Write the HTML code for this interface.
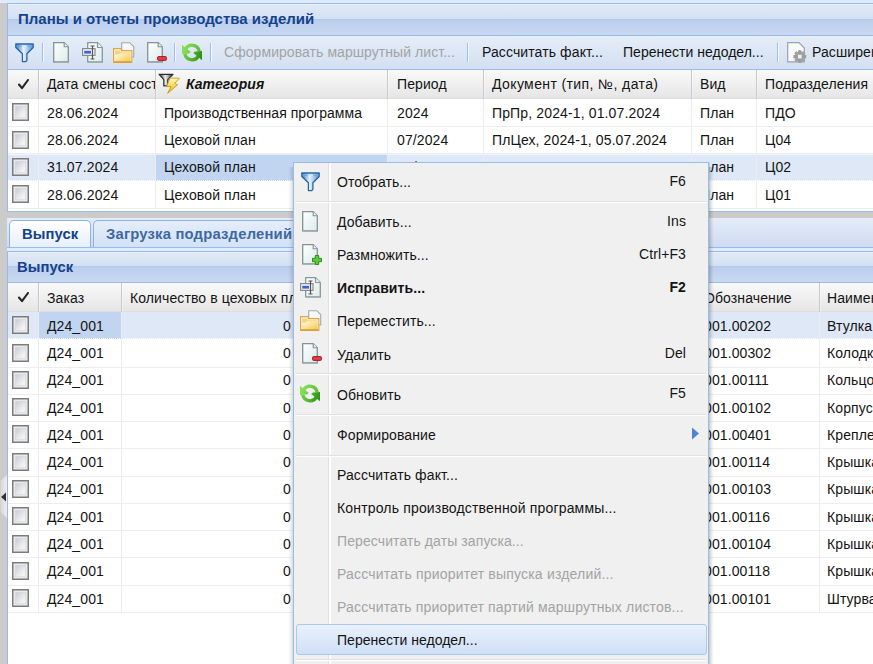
<!DOCTYPE html><html><head><meta charset="utf-8"><style>*{box-sizing:border-box}
html,body{margin:0;padding:0}
body{width:873px;height:664px;overflow:hidden;position:relative;background:#cbcbcb;font-family:"Liberation Sans",sans-serif;font-size:14px;color:#141414;letter-spacing:0.1px}
.a{position:absolute}
.t{position:absolute;white-space:nowrap;line-height:16px}
.hdr{background:linear-gradient(to bottom,#f1f5fb 0px,#e0e9f6 1px,#d4e1f3 14.8px,#b2c9ea 15.3px,#b4cbeb 16px,#bccfee 16.8px,#c8d9f1 100%)}
.hdr2{background:linear-gradient(to bottom,#f1f5fb 0px,#e0e9f6 1px,#d4e1f3 13.8px,#b2c9ea 14.3px,#b4cbeb 15px,#bccfee 15.8px,#c8d9f1 100%)}
.ttl{color:#15428b;font-weight:bold;font-size:15px}
.tb{background:linear-gradient(to bottom,#e5edf8,#d3e0f1)}
.gh{background:linear-gradient(to bottom,#f9f9f9,#e5e5e5)}
.dis{color:#a3a3a3}
.clip{position:absolute;overflow:hidden}
</style></head><body>
<svg width="0" height="0" style="position:absolute"><defs>
<linearGradient id="gdoc" x1="0" y1="0" x2="1" y2="1"><stop offset="0" stop-color="#ffffff"/><stop offset="1" stop-color="#dcebea"/></linearGradient>
<linearGradient id="gfun" x1="0" y1="0" x2="1" y2="0"><stop offset="0" stop-color="#3a78c0"/><stop offset="0.45" stop-color="#e8f4fc"/><stop offset="1" stop-color="#4f92d4"/></linearGradient>
<linearGradient id="gfold" x1="0" y1="0" x2="1" y2="1"><stop offset="0" stop-color="#fffbe8"/><stop offset="0.6" stop-color="#f6e08a"/><stop offset="1" stop-color="#f0cc40"/></linearGradient>
<linearGradient id="gfoldb" x1="0" y1="0" x2="0" y2="1"><stop offset="0" stop-color="#f4dc98"/><stop offset="1" stop-color="#ecc060"/></linearGradient>
<linearGradient id="ggrn" gradientUnits="userSpaceOnUse" x1="2" y1="4" x2="18" y2="10"><stop offset="0" stop-color="#86e058"/><stop offset="1" stop-color="#5cbc34"/></linearGradient>
<linearGradient id="ggrn2" gradientUnits="userSpaceOnUse" x1="3" y1="12" x2="20" y2="16"><stop offset="0" stop-color="#6ccc40"/><stop offset="1" stop-color="#2a8e14"/></linearGradient>
<linearGradient id="gcb" x1="0" y1="0" x2="1" y2="1"><stop offset="0" stop-color="#c6cad6"/><stop offset="0.7" stop-color="#f0f0f2"/><stop offset="1" stop-color="#f6f6f6"/></linearGradient>
<linearGradient id="gbolt" x1="0" y1="0" x2="0" y2="1"><stop offset="0" stop-color="#fff8c8"/><stop offset="0.5" stop-color="#f6da58"/><stop offset="1" stop-color="#e8b820"/></linearGradient>
<linearGradient id="ggfun" x1="0" y1="0" x2="1" y2="0"><stop offset="0" stop-color="#2a2a2a"/><stop offset="0.45" stop-color="#eeeeee"/><stop offset="1" stop-color="#303030"/></linearGradient>
</defs></svg>
<div class="a" style="left:0px;top:0px;width:873px;height:3px;background:#dfeafc"></div>
<svg class="a" style="left:0;top:475px" width="7" height="43" viewBox="0 0 7 43"><defs><linearGradient id="gtool" x1="0" y1="0" x2="1" y2="0"><stop offset="0" stop-color="#d8d8d8"/><stop offset="1" stop-color="#ececec"/></linearGradient></defs><path d="M7,0 L0.5,6 V37 L7,43 Z" fill="url(#gtool)"/><path d="M1,22 L6,17.5 V26.5 Z" fill="#333"/></svg>
<div class="a" style="left:7px;top:3px;width:880px;height:209px;border:1px solid #99bbe8;background:#fff"></div>
<div class="a hdr" style="left:8px;top:4px;width:870px;height:31px"></div>
<div class="a" style="left:8px;top:35px;width:870px;height:1px;background:#99bbe8"></div>
<div class="t ttl" style="left:18px;top:11px;;letter-spacing:-0.009px">Планы и отчеты производства изделий</div>
<div class="a tb" style="left:8px;top:36px;width:870px;height:33px"></div>
<div class="a" style="left:8px;top:69px;width:870px;height:1px;background:#99bbe8"></div>
<div class="a" style="left:42px;top:43px;width:1px;height:19px;background:#98c0f4"></div>
<div class="a" style="left:43px;top:43px;width:1px;height:19px;background:#f4f8fd"></div>
<div class="a" style="left:174px;top:43px;width:1px;height:19px;background:#98c0f4"></div>
<div class="a" style="left:175px;top:43px;width:1px;height:19px;background:#f4f8fd"></div>
<div class="a" style="left:210px;top:43px;width:1px;height:19px;background:#98c0f4"></div>
<div class="a" style="left:211px;top:43px;width:1px;height:19px;background:#f4f8fd"></div>
<div class="a" style="left:467px;top:43px;width:1px;height:19px;background:#98c0f4"></div>
<div class="a" style="left:468px;top:43px;width:1px;height:19px;background:#f4f8fd"></div>
<div class="a" style="left:777px;top:43px;width:1px;height:19px;background:#98c0f4"></div>
<div class="a" style="left:778px;top:43px;width:1px;height:19px;background:#f4f8fd"></div>
<svg class="a" style="left:15px;top:43px" width="19" height="20" viewBox="0 0 19 20"><path d="M0.8,1 H18.2 V4.5 L11.9,10.8 V17.4 L10.8,18.6 H7.4 V10.8 L0.8,4.5 Z" fill="url(#gfun)" stroke="#2d64a8" stroke-width="1.3" stroke-linejoin="round"/><path d="M1.5,3.2 H17.5" stroke="#5aaaf0" stroke-width="1"/><path d="M7,3.2 H12" stroke="#ffffff" stroke-width="1"/></svg>
<svg class="a" style="left:53px;top:42px" width="22" height="23" viewBox="0 0 22 23"><rect x="1" y="19.6" width="15" height="1.4" fill="#000" opacity="0.12"/><path d="M0.7,0.7 H11.2 L15.3,4.8 V19.8 H0.7 Z" fill="url(#gdoc)" stroke="#829494" stroke-width="1.3"/><path d="M11.2,0.7 V4.8 H15.3" fill="#e8f0f0" stroke="#829494" stroke-width="1.1"/></svg>
<svg class="a" style="left:82px;top:42px" width="22" height="23" viewBox="0 0 22 23"><rect x="6" y="19.6" width="15" height="1.4" fill="#000" opacity="0.12"/><path d="M5.7,0.7 H15.5 L20.3,5.5 V19.8 H5.7 Z" fill="url(#gdoc)" stroke="#869898" stroke-width="1.3"/><path d="M15.5,0.7 V5.5 H20.3" fill="#e8f0f0" stroke="#869898" stroke-width="1.2"/><rect x="0.6" y="6.6" width="12.4" height="6.8" fill="#f4f4f4" stroke="#8a8a8a" stroke-width="1.2"/><rect x="2.2" y="8.8" width="6.8" height="2.8" fill="#3c64d8"/><path d="M10.5,4.3 V16.7 M8.5,4 H12.5 M8.5,17 H12.5" stroke="#555" stroke-width="1.2"/></svg>
<svg class="a" style="left:113px;top:42px" width="22" height="22" viewBox="0 0 22 22"><path d="M8.7,0.7 H16.8 L20.7,4.6 V15 H8.7 Z" fill="#f8f8f8" stroke="#a4a8ac" stroke-width="1.1"/><path d="M0.6,6.6 H8.4 V8.6 H18.8 V20.4 H0.6 Z" fill="url(#gfoldb)" stroke="#e0a548" stroke-width="1.2"/><path d="M1.6,7.8 H7.4 V9.8 H17.8 V19.4 H1.6 Z" fill="none" stroke="#fff6dc" stroke-width="0.9" opacity="0.9"/><path d="M2,12.4 H5.6 L6.6,11.2 H17.4 V19 H2 Z" fill="url(#gfold)"/><path d="M1.2,19.8 H18.2" stroke="#e08c28" stroke-width="1.1"/></svg>
<svg class="a" style="left:147px;top:42px" width="22" height="23" viewBox="0 0 22 23"><rect x="1" y="19.6" width="15" height="1.4" fill="#000" opacity="0.12"/><path d="M0.7,0.7 H11.2 L15.3,4.8 V19.8 H0.7 Z" fill="url(#gdoc)" stroke="#829494" stroke-width="1.3"/><path d="M11.2,0.7 V4.8 H15.3" fill="#e8f0f0" stroke="#829494" stroke-width="1.1"/></svg>
<svg class="a" style="left:157px;top:56px" width="10" height="5" viewBox="0 0 10 5"><rect x="0.6" y="0.6" width="8.8" height="3.8" rx="0.8" fill="#e0404a" stroke="#a81820" stroke-width="1"/></svg>
<svg class="a" style="left:182px;top:43px" width="21" height="19" viewBox="0 0 21 19"><path d="M17.2,8.1 A7.35,7.35 0 0 0 3.63,5.83" fill="none" stroke="url(#ggrn)" stroke-width="3.3"/><path d="M0,1.7 L0,10.9 L7,10.4 L8.8,8.9 Z" fill="url(#ggrn)"/><path d="M2.8,10.9 A7.35,7.35 0 0 0 16.37,13.17" fill="none" stroke="url(#ggrn2)" stroke-width="3.3"/><path d="M20,17.3 L20,8.1 L13,8.6 L11.2,10.1 Z" fill="url(#ggrn2)"/></svg>
<div class="t dis" style="left:224px;top:44px;;letter-spacing:0.062px">Сформировать маршрутный лист...</div>
<div class="t " style="left:482px;top:44px;;letter-spacing:0.107px">Рассчитать факт...</div>
<div class="t " style="left:623px;top:44px;;letter-spacing:0.017px">Перенести недодел...</div>
<svg class="a" style="left:787px;top:42px" width="20" height="22" viewBox="0 0 20 22"><path d="M0.7,0.7 H12 L17.3,6 V19.8 H0.7 Z" fill="#fafafa" stroke="#9aa4ac" stroke-width="1.2"/><g transform="translate(12.8,14.6)"><circle r="5" fill="#a6a6a6"/><path d="M-1.6,-6.4 H1.6 V6.4 H-1.6 Z M-6.4,-1.6 V1.6 H6.4 V-1.6 Z" fill="#9c9c9c"/><path d="M-1.6,-6.4 H1.6 V6.4 H-1.6 Z M-6.4,-1.6 V1.6 H6.4 V-1.6 Z" fill="#a2a2a2" transform="rotate(45)"/><rect x="-1.8" y="-1.8" width="3.6" height="3.6" fill="#f0f0f0"/></g></svg>
<div class="t " style="left:812px;top:44px;">Расширенный поиск</div>
<div class="a gh" style="left:8px;top:70px;width:870px;height:29px"></div>
<div class="a" style="left:8px;top:98px;width:870px;height:1px;background:#dedede"></div>
<div class="a" style="left:38px;top:70px;width:1px;height:29px;background:#c9c9c9"></div>
<div class="a" style="left:39px;top:70px;width:1px;height:29px;background:rgba(255,255,255,0.35)"></div>
<div class="a" style="left:155px;top:70px;width:1px;height:29px;background:#c9c9c9"></div>
<div class="a" style="left:156px;top:70px;width:1px;height:29px;background:rgba(255,255,255,0.35)"></div>
<div class="a" style="left:387px;top:70px;width:1px;height:29px;background:#c9c9c9"></div>
<div class="a" style="left:388px;top:70px;width:1px;height:29px;background:rgba(255,255,255,0.35)"></div>
<div class="a" style="left:483px;top:70px;width:1px;height:29px;background:#c9c9c9"></div>
<div class="a" style="left:484px;top:70px;width:1px;height:29px;background:rgba(255,255,255,0.35)"></div>
<div class="a" style="left:691px;top:70px;width:1px;height:29px;background:#c9c9c9"></div>
<div class="a" style="left:692px;top:70px;width:1px;height:29px;background:rgba(255,255,255,0.35)"></div>
<div class="a" style="left:756px;top:70px;width:1px;height:29px;background:#c9c9c9"></div>
<div class="a" style="left:757px;top:70px;width:1px;height:29px;background:rgba(255,255,255,0.35)"></div>
<svg class="a" style="left:18px;top:79px" width="11" height="11" viewBox="0 0 11 11"><path d="M1,5.5 L4,9.2 L10,1" fill="none" stroke="#252525" stroke-width="2.1" stroke-linecap="round" stroke-linejoin="round"/></svg>
<div class="clip" style="left:39px;top:70px;width:116px;height:29px"><div class="t" style="left:8px;top:6px">Дата смены состояния</div></div>
<svg class="a" style="left:156px;top:72px" width="26" height="24" viewBox="0 0 26 24"><path d="M3.1,2.3 H17 L11.8,7.6 V13.7 L7.8,13.9 V7.6 Z" fill="url(#ggfun)" stroke="#2e2e2e" stroke-width="1.2" stroke-linejoin="round"/><path d="M14,6 L23.5,6.2 L18.6,11.4 L21.6,12.8 L11.6,21.4 L15,14.6 L10.6,14.6 Z" fill="url(#gbolt)" stroke="#c89a18" stroke-width="0.9" stroke-linejoin="round"/></svg>
<div class="t " style="left:186px;top:76px;font-weight:bold;font-style:italic">Категория</div>
<div class="t " style="left:397px;top:76px;">Период</div>
<div class="t " style="left:492px;top:76px;;letter-spacing:0.391px">Документ (тип, №, дата)</div>
<div class="t " style="left:700px;top:76px;">Вид</div>
<div class="t " style="left:765px;top:76px;">Подразделения</div>
<div class="a" style="left:8px;top:126.0px;width:870px;height:1px;background:#ededed"></div>
<div class="a" style="left:38px;top:99.0px;width:1px;height:27.25px;background:#ededed"></div>
<div class="a" style="left:155px;top:99.0px;width:1px;height:27.25px;background:#ededed"></div>
<div class="a" style="left:387px;top:99.0px;width:1px;height:27.25px;background:#ededed"></div>
<div class="a" style="left:483px;top:99.0px;width:1px;height:27.25px;background:#ededed"></div>
<div class="a" style="left:691px;top:99.0px;width:1px;height:27.25px;background:#ededed"></div>
<div class="a" style="left:756px;top:99.0px;width:1px;height:27.25px;background:#ededed"></div>
<svg class="a" style="left:12px;top:103.4px" width="17" height="18" viewBox="0 0 17 18"><rect x="0.75" y="0.75" width="15.5" height="16.5" fill="#ececec" stroke="#7c7c7c" stroke-width="1.5"/><rect x="3.2" y="3.2" width="10.6" height="11.6" fill="url(#gcb)" stroke="#d4d6da" stroke-width="0.7"/></svg>
<div class="t " style="left:47px;top:104.8px;;letter-spacing:0.132px">28.06.2024</div>
<div class="t " style="left:164px;top:104.8px;;letter-spacing:0.044px">Производственная программа</div>
<div class="t " style="left:397px;top:104.8px;">2024</div>
<div class="t " style="left:492px;top:104.8px;;letter-spacing:0.136px">ПрПр, 2024-1, 01.07.2024</div>
<div class="t " style="left:700px;top:104.8px;">План</div>
<div class="t " style="left:765px;top:104.8px;">ПДО</div>
<div class="a" style="left:8px;top:153.25px;width:870px;height:1px;background:#ededed"></div>
<div class="a" style="left:38px;top:126.25px;width:1px;height:27.25px;background:#ededed"></div>
<div class="a" style="left:155px;top:126.25px;width:1px;height:27.25px;background:#ededed"></div>
<div class="a" style="left:387px;top:126.25px;width:1px;height:27.25px;background:#ededed"></div>
<div class="a" style="left:483px;top:126.25px;width:1px;height:27.25px;background:#ededed"></div>
<div class="a" style="left:691px;top:126.25px;width:1px;height:27.25px;background:#ededed"></div>
<div class="a" style="left:756px;top:126.25px;width:1px;height:27.25px;background:#ededed"></div>
<svg class="a" style="left:12px;top:130.65px" width="17" height="18" viewBox="0 0 17 18"><rect x="0.75" y="0.75" width="15.5" height="16.5" fill="#ececec" stroke="#7c7c7c" stroke-width="1.5"/><rect x="3.2" y="3.2" width="10.6" height="11.6" fill="url(#gcb)" stroke="#d4d6da" stroke-width="0.7"/></svg>
<div class="t " style="left:47px;top:132.05px;;letter-spacing:0.132px">28.06.2024</div>
<div class="t " style="left:164px;top:132.05px;">Цеховой план</div>
<div class="t " style="left:397px;top:132.05px;">07/2024</div>
<div class="t " style="left:492px;top:132.05px;;letter-spacing:0.108px">ПлЦех, 2024-1, 05.07.2024</div>
<div class="t " style="left:700px;top:132.05px;">План</div>
<div class="t " style="left:765px;top:132.05px;">Ц04</div>
<div class="a" style="left:8px;top:153.5px;width:870px;height:27.25px;background:#dfe8f6"></div>
<div class="a" style="left:156px;top:153.5px;width:231px;height:27.25px;background:#c1d5f0"></div>
<div class="a" style="left:8px;top:153.5px;width:870px;height:27.25px;border-top:1px solid rgba(255,255,255,0.55);border-bottom:1px dotted #ffffff"></div>
<div class="a" style="left:38px;top:153.5px;width:1px;height:27.25px;background:#ededed"></div>
<div class="a" style="left:155px;top:153.5px;width:1px;height:27.25px;background:#ededed"></div>
<div class="a" style="left:387px;top:153.5px;width:1px;height:27.25px;background:#ededed"></div>
<div class="a" style="left:483px;top:153.5px;width:1px;height:27.25px;background:#ededed"></div>
<div class="a" style="left:691px;top:153.5px;width:1px;height:27.25px;background:#ededed"></div>
<div class="a" style="left:756px;top:153.5px;width:1px;height:27.25px;background:#ededed"></div>
<svg class="a" style="left:12px;top:157.9px" width="17" height="18" viewBox="0 0 17 18"><rect x="0.75" y="0.75" width="15.5" height="16.5" fill="#ececec" stroke="#7c7c7c" stroke-width="1.5"/><rect x="3.2" y="3.2" width="10.6" height="11.6" fill="url(#gcb)" stroke="#d4d6da" stroke-width="0.7"/></svg>
<div class="t " style="left:47px;top:159.3px;;letter-spacing:0.132px">31.07.2024</div>
<div class="t " style="left:164px;top:159.3px;">Цеховой план</div>
<div class="t " style="left:397px;top:159.3px;">07/2024</div>
<div class="t " style="left:492px;top:159.3px;">ПлЦех, 2024-1, 31.07.2024</div>
<div class="t " style="left:700px;top:159.3px;">План</div>
<div class="t " style="left:765px;top:159.3px;">Ц02</div>
<div class="a" style="left:8px;top:207.75px;width:870px;height:1px;background:#ededed"></div>
<div class="a" style="left:38px;top:180.75px;width:1px;height:27.25px;background:#ededed"></div>
<div class="a" style="left:155px;top:180.75px;width:1px;height:27.25px;background:#ededed"></div>
<div class="a" style="left:387px;top:180.75px;width:1px;height:27.25px;background:#ededed"></div>
<div class="a" style="left:483px;top:180.75px;width:1px;height:27.25px;background:#ededed"></div>
<div class="a" style="left:691px;top:180.75px;width:1px;height:27.25px;background:#ededed"></div>
<div class="a" style="left:756px;top:180.75px;width:1px;height:27.25px;background:#ededed"></div>
<svg class="a" style="left:12px;top:185.15px" width="17" height="18" viewBox="0 0 17 18"><rect x="0.75" y="0.75" width="15.5" height="16.5" fill="#ececec" stroke="#7c7c7c" stroke-width="1.5"/><rect x="3.2" y="3.2" width="10.6" height="11.6" fill="url(#gcb)" stroke="#d4d6da" stroke-width="0.7"/></svg>
<div class="t " style="left:47px;top:186.55px;;letter-spacing:0.132px">28.06.2024</div>
<div class="t " style="left:164px;top:186.55px;">Цеховой план</div>
<div class="t " style="left:397px;top:186.55px;">07/2024</div>
<div class="t " style="left:492px;top:186.55px;;letter-spacing:0.108px">ПлЦех, 2024-1, 05.07.2024</div>
<div class="t " style="left:700px;top:186.55px;">План</div>
<div class="t " style="left:765px;top:186.55px;">Ц01</div>
<div class="a" style="left:7px;top:218px;width:880px;height:33px;background:#deecfd"></div>
<div class="a" style="left:7px;top:218px;width:880px;height:29px;background:linear-gradient(to bottom,#e4ecf8,#cedcf1)"></div>
<div class="a" style="left:7px;top:246.5px;width:880px;height:1.5px;background:#99bbe8"></div>
<div class="a" style="left:9px;top:220px;width:82px;height:27px;border:1px solid #8db2e3;border-bottom:none;border-radius:5px 5px 0 0;background:linear-gradient(to bottom,#ffffff,#e6effb)"></div>
<div class="t ttl" style="left:22px;top:226px;font-size:14.8px">Выпуск</div>
<div class="a" style="left:93px;top:220px;width:300px;height:27px;border:1px solid #8db2e3;border-bottom:none;border-radius:5px 5px 0 0;background:linear-gradient(to bottom,#e4edfa,#d3e2f6)"></div>
<div class="t ttl" style="left:106px;top:226px;font-size:14.8px;color:#3f68a2;letter-spacing:0.2px">Загрузка подразделений</div>
<div class="a" style="left:7px;top:251px;width:880px;height:420px;border:1px solid #99bbe8;background:#fff"></div>
<div class="a hdr2" style="left:8px;top:252px;width:870px;height:30px"></div>
<div class="a" style="left:8px;top:282px;width:870px;height:1px;background:#99bbe8"></div>
<div class="t ttl" style="left:17px;top:259px;font-size:14.8px">Выпуск</div>
<div class="a gh" style="left:8px;top:283px;width:870px;height:29px"></div>
<div class="a" style="left:8px;top:311px;width:870px;height:1px;background:#dedede"></div>
<div class="a" style="left:38px;top:283px;width:1px;height:29px;background:#c9c9c9"></div>
<div class="a" style="left:39px;top:283px;width:1px;height:29px;background:rgba(255,255,255,0.35)"></div>
<div class="a" style="left:121px;top:283px;width:1px;height:29px;background:#c9c9c9"></div>
<div class="a" style="left:122px;top:283px;width:1px;height:29px;background:rgba(255,255,255,0.35)"></div>
<div class="a" style="left:695px;top:283px;width:1px;height:29px;background:#c9c9c9"></div>
<div class="a" style="left:696px;top:283px;width:1px;height:29px;background:rgba(255,255,255,0.35)"></div>
<div class="a" style="left:819px;top:283px;width:1px;height:29px;background:#c9c9c9"></div>
<div class="a" style="left:820px;top:283px;width:1px;height:29px;background:rgba(255,255,255,0.35)"></div>
<svg class="a" style="left:18px;top:292px" width="11" height="11" viewBox="0 0 11 11"><path d="M1,5.5 L4,9.2 L10,1" fill="none" stroke="#252525" stroke-width="2.1" stroke-linecap="round" stroke-linejoin="round"/></svg>
<div class="t " style="left:47px;top:290.3px;">Заказ</div>
<div class="t " style="left:130px;top:290.3px;">Количество в цеховых планах</div>
<div class="t " style="left:704px;top:290.3px;">Обозначение</div>
<div class="t " style="left:827px;top:290.3px;">Наименование</div>
<div class="a" style="left:8px;top:312.0px;width:870px;height:27.27px;background:#dfe8f6"></div>
<div class="a" style="left:39px;top:312.0px;width:82px;height:27.27px;background:#c1d5f0"></div>
<div class="a" style="left:8px;top:312.0px;width:870px;height:27.27px;border-bottom:1px dotted #ffffff"></div>
<div class="a" style="left:38px;top:312.0px;width:1px;height:27.27px;background:#ededed"></div>
<div class="a" style="left:121px;top:312.0px;width:1px;height:27.27px;background:#ededed"></div>
<div class="a" style="left:695px;top:312.0px;width:1px;height:27.27px;background:#ededed"></div>
<div class="a" style="left:819px;top:312.0px;width:1px;height:27.27px;background:#ededed"></div>
<svg class="a" style="left:12px;top:316.4px" width="17" height="18" viewBox="0 0 17 18"><rect x="0.75" y="0.75" width="15.5" height="16.5" fill="#ececec" stroke="#7c7c7c" stroke-width="1.5"/><rect x="3.2" y="3.2" width="10.6" height="11.6" fill="url(#gcb)" stroke="#d4d6da" stroke-width="0.7"/></svg>
<div class="t " style="left:47px;top:317.8px;">Д24_001</div>
<div class="t" style="left:121px;top:317.8px;width:170px;text-align:right">0</div>
<div class="t " style="left:704px;top:317.8px;">001.00202</div>
<div class="t " style="left:827px;top:317.8px;">Втулка</div>
<div class="a" style="left:8px;top:366.53999999999996px;width:870px;height:1px;background:#ededed"></div>
<div class="a" style="left:38px;top:339.27px;width:1px;height:27.27px;background:#ededed"></div>
<div class="a" style="left:121px;top:339.27px;width:1px;height:27.27px;background:#ededed"></div>
<div class="a" style="left:695px;top:339.27px;width:1px;height:27.27px;background:#ededed"></div>
<div class="a" style="left:819px;top:339.27px;width:1px;height:27.27px;background:#ededed"></div>
<svg class="a" style="left:12px;top:343.66999999999996px" width="17" height="18" viewBox="0 0 17 18"><rect x="0.75" y="0.75" width="15.5" height="16.5" fill="#ececec" stroke="#7c7c7c" stroke-width="1.5"/><rect x="3.2" y="3.2" width="10.6" height="11.6" fill="url(#gcb)" stroke="#d4d6da" stroke-width="0.7"/></svg>
<div class="t " style="left:47px;top:345.07px;">Д24_001</div>
<div class="t" style="left:121px;top:345.07px;width:170px;text-align:right">0</div>
<div class="t " style="left:704px;top:345.07px;">001.00302</div>
<div class="t " style="left:827px;top:345.07px;">Колодка</div>
<div class="a" style="left:8px;top:393.81px;width:870px;height:1px;background:#ededed"></div>
<div class="a" style="left:38px;top:366.54px;width:1px;height:27.27px;background:#ededed"></div>
<div class="a" style="left:121px;top:366.54px;width:1px;height:27.27px;background:#ededed"></div>
<div class="a" style="left:695px;top:366.54px;width:1px;height:27.27px;background:#ededed"></div>
<div class="a" style="left:819px;top:366.54px;width:1px;height:27.27px;background:#ededed"></div>
<svg class="a" style="left:12px;top:370.94px" width="17" height="18" viewBox="0 0 17 18"><rect x="0.75" y="0.75" width="15.5" height="16.5" fill="#ececec" stroke="#7c7c7c" stroke-width="1.5"/><rect x="3.2" y="3.2" width="10.6" height="11.6" fill="url(#gcb)" stroke="#d4d6da" stroke-width="0.7"/></svg>
<div class="t " style="left:47px;top:372.34px;">Д24_001</div>
<div class="t" style="left:121px;top:372.34px;width:170px;text-align:right">0</div>
<div class="t " style="left:704px;top:372.34px;">001.00111</div>
<div class="t " style="left:827px;top:372.34px;">Кольцо</div>
<div class="a" style="left:8px;top:421.08px;width:870px;height:1px;background:#ededed"></div>
<div class="a" style="left:38px;top:393.81px;width:1px;height:27.27px;background:#ededed"></div>
<div class="a" style="left:121px;top:393.81px;width:1px;height:27.27px;background:#ededed"></div>
<div class="a" style="left:695px;top:393.81px;width:1px;height:27.27px;background:#ededed"></div>
<div class="a" style="left:819px;top:393.81px;width:1px;height:27.27px;background:#ededed"></div>
<svg class="a" style="left:12px;top:398.21px" width="17" height="18" viewBox="0 0 17 18"><rect x="0.75" y="0.75" width="15.5" height="16.5" fill="#ececec" stroke="#7c7c7c" stroke-width="1.5"/><rect x="3.2" y="3.2" width="10.6" height="11.6" fill="url(#gcb)" stroke="#d4d6da" stroke-width="0.7"/></svg>
<div class="t " style="left:47px;top:399.61px;">Д24_001</div>
<div class="t" style="left:121px;top:399.61px;width:170px;text-align:right">0</div>
<div class="t " style="left:704px;top:399.61px;">001.00102</div>
<div class="t " style="left:827px;top:399.61px;">Корпус</div>
<div class="a" style="left:8px;top:448.34999999999997px;width:870px;height:1px;background:#ededed"></div>
<div class="a" style="left:38px;top:421.08px;width:1px;height:27.27px;background:#ededed"></div>
<div class="a" style="left:121px;top:421.08px;width:1px;height:27.27px;background:#ededed"></div>
<div class="a" style="left:695px;top:421.08px;width:1px;height:27.27px;background:#ededed"></div>
<div class="a" style="left:819px;top:421.08px;width:1px;height:27.27px;background:#ededed"></div>
<svg class="a" style="left:12px;top:425.47999999999996px" width="17" height="18" viewBox="0 0 17 18"><rect x="0.75" y="0.75" width="15.5" height="16.5" fill="#ececec" stroke="#7c7c7c" stroke-width="1.5"/><rect x="3.2" y="3.2" width="10.6" height="11.6" fill="url(#gcb)" stroke="#d4d6da" stroke-width="0.7"/></svg>
<div class="t " style="left:47px;top:426.88px;">Д24_001</div>
<div class="t" style="left:121px;top:426.88px;width:170px;text-align:right">0</div>
<div class="t " style="left:704px;top:426.88px;">001.00401</div>
<div class="t " style="left:827px;top:426.88px;">Крепление</div>
<div class="a" style="left:8px;top:475.62px;width:870px;height:1px;background:#ededed"></div>
<div class="a" style="left:38px;top:448.35px;width:1px;height:27.27px;background:#ededed"></div>
<div class="a" style="left:121px;top:448.35px;width:1px;height:27.27px;background:#ededed"></div>
<div class="a" style="left:695px;top:448.35px;width:1px;height:27.27px;background:#ededed"></div>
<div class="a" style="left:819px;top:448.35px;width:1px;height:27.27px;background:#ededed"></div>
<svg class="a" style="left:12px;top:452.75px" width="17" height="18" viewBox="0 0 17 18"><rect x="0.75" y="0.75" width="15.5" height="16.5" fill="#ececec" stroke="#7c7c7c" stroke-width="1.5"/><rect x="3.2" y="3.2" width="10.6" height="11.6" fill="url(#gcb)" stroke="#d4d6da" stroke-width="0.7"/></svg>
<div class="t " style="left:47px;top:454.15px;">Д24_001</div>
<div class="t" style="left:121px;top:454.15px;width:170px;text-align:right">0</div>
<div class="t " style="left:704px;top:454.15px;">001.00114</div>
<div class="t " style="left:827px;top:454.15px;">Крышка</div>
<div class="a" style="left:8px;top:502.89px;width:870px;height:1px;background:#ededed"></div>
<div class="a" style="left:38px;top:475.62px;width:1px;height:27.27px;background:#ededed"></div>
<div class="a" style="left:121px;top:475.62px;width:1px;height:27.27px;background:#ededed"></div>
<div class="a" style="left:695px;top:475.62px;width:1px;height:27.27px;background:#ededed"></div>
<div class="a" style="left:819px;top:475.62px;width:1px;height:27.27px;background:#ededed"></div>
<svg class="a" style="left:12px;top:480.02px" width="17" height="18" viewBox="0 0 17 18"><rect x="0.75" y="0.75" width="15.5" height="16.5" fill="#ececec" stroke="#7c7c7c" stroke-width="1.5"/><rect x="3.2" y="3.2" width="10.6" height="11.6" fill="url(#gcb)" stroke="#d4d6da" stroke-width="0.7"/></svg>
<div class="t " style="left:47px;top:481.42px;">Д24_001</div>
<div class="t" style="left:121px;top:481.42px;width:170px;text-align:right">0</div>
<div class="t " style="left:704px;top:481.42px;">001.00103</div>
<div class="t " style="left:827px;top:481.42px;">Крышка</div>
<div class="a" style="left:8px;top:530.16px;width:870px;height:1px;background:#ededed"></div>
<div class="a" style="left:38px;top:502.89px;width:1px;height:27.27px;background:#ededed"></div>
<div class="a" style="left:121px;top:502.89px;width:1px;height:27.27px;background:#ededed"></div>
<div class="a" style="left:695px;top:502.89px;width:1px;height:27.27px;background:#ededed"></div>
<div class="a" style="left:819px;top:502.89px;width:1px;height:27.27px;background:#ededed"></div>
<svg class="a" style="left:12px;top:507.28999999999996px" width="17" height="18" viewBox="0 0 17 18"><rect x="0.75" y="0.75" width="15.5" height="16.5" fill="#ececec" stroke="#7c7c7c" stroke-width="1.5"/><rect x="3.2" y="3.2" width="10.6" height="11.6" fill="url(#gcb)" stroke="#d4d6da" stroke-width="0.7"/></svg>
<div class="t " style="left:47px;top:508.69px;">Д24_001</div>
<div class="t" style="left:121px;top:508.69px;width:170px;text-align:right">0</div>
<div class="t " style="left:704px;top:508.69px;">001.00116</div>
<div class="t " style="left:827px;top:508.69px;">Крышка</div>
<div class="a" style="left:8px;top:557.43px;width:870px;height:1px;background:#ededed"></div>
<div class="a" style="left:38px;top:530.16px;width:1px;height:27.27px;background:#ededed"></div>
<div class="a" style="left:121px;top:530.16px;width:1px;height:27.27px;background:#ededed"></div>
<div class="a" style="left:695px;top:530.16px;width:1px;height:27.27px;background:#ededed"></div>
<div class="a" style="left:819px;top:530.16px;width:1px;height:27.27px;background:#ededed"></div>
<svg class="a" style="left:12px;top:534.56px" width="17" height="18" viewBox="0 0 17 18"><rect x="0.75" y="0.75" width="15.5" height="16.5" fill="#ececec" stroke="#7c7c7c" stroke-width="1.5"/><rect x="3.2" y="3.2" width="10.6" height="11.6" fill="url(#gcb)" stroke="#d4d6da" stroke-width="0.7"/></svg>
<div class="t " style="left:47px;top:535.96px;">Д24_001</div>
<div class="t" style="left:121px;top:535.96px;width:170px;text-align:right">0</div>
<div class="t " style="left:704px;top:535.96px;">001.00104</div>
<div class="t " style="left:827px;top:535.96px;">Крышка</div>
<div class="a" style="left:8px;top:584.6999999999999px;width:870px;height:1px;background:#ededed"></div>
<div class="a" style="left:38px;top:557.43px;width:1px;height:27.27px;background:#ededed"></div>
<div class="a" style="left:121px;top:557.43px;width:1px;height:27.27px;background:#ededed"></div>
<div class="a" style="left:695px;top:557.43px;width:1px;height:27.27px;background:#ededed"></div>
<div class="a" style="left:819px;top:557.43px;width:1px;height:27.27px;background:#ededed"></div>
<svg class="a" style="left:12px;top:561.8299999999999px" width="17" height="18" viewBox="0 0 17 18"><rect x="0.75" y="0.75" width="15.5" height="16.5" fill="#ececec" stroke="#7c7c7c" stroke-width="1.5"/><rect x="3.2" y="3.2" width="10.6" height="11.6" fill="url(#gcb)" stroke="#d4d6da" stroke-width="0.7"/></svg>
<div class="t " style="left:47px;top:563.23px;">Д24_001</div>
<div class="t" style="left:121px;top:563.23px;width:170px;text-align:right">0</div>
<div class="t " style="left:704px;top:563.23px;">001.00118</div>
<div class="t " style="left:827px;top:563.23px;">Крышка</div>
<div class="a" style="left:8px;top:611.97px;width:870px;height:1px;background:#ededed"></div>
<div class="a" style="left:38px;top:584.7px;width:1px;height:27.27px;background:#ededed"></div>
<div class="a" style="left:121px;top:584.7px;width:1px;height:27.27px;background:#ededed"></div>
<div class="a" style="left:695px;top:584.7px;width:1px;height:27.27px;background:#ededed"></div>
<div class="a" style="left:819px;top:584.7px;width:1px;height:27.27px;background:#ededed"></div>
<svg class="a" style="left:12px;top:589.1px" width="17" height="18" viewBox="0 0 17 18"><rect x="0.75" y="0.75" width="15.5" height="16.5" fill="#ececec" stroke="#7c7c7c" stroke-width="1.5"/><rect x="3.2" y="3.2" width="10.6" height="11.6" fill="url(#gcb)" stroke="#d4d6da" stroke-width="0.7"/></svg>
<div class="t " style="left:47px;top:590.5px;">Д24_001</div>
<div class="t" style="left:121px;top:590.5px;width:170px;text-align:right">0</div>
<div class="t " style="left:704px;top:590.5px;">001.00101</div>
<div class="t " style="left:827px;top:590.5px;">Штурвал</div>
<div class="a" style="left:709px;top:167px;width:5px;height:500px;background:linear-gradient(to right,rgba(0,0,0,0.22),rgba(0,0,0,0.06) 60%,rgba(0,0,0,0))"></div>
<div class="a" style="left:288px;top:167px;width:5px;height:500px;background:linear-gradient(to left,rgba(0,0,0,0.14),rgba(0,0,0,0.04) 60%,rgba(0,0,0,0))"></div>
<div class="a" style="left:293px;top:162px;width:416px;height:510px;border:1px solid #99bbe8;background:#f0f0f0"></div>
<div class="a" style="left:328px;top:163px;width:1px;height:510px;background:#e0e0e0"></div>
<div class="a" style="left:329px;top:163px;width:2px;height:510px;background:#ffffff"></div>
<div class="a" style="left:296px;top:201px;width:410px;height:1px;background:#e0e0e0"></div>
<div class="a" style="left:296px;top:202px;width:410px;height:1.3px;background:#ffffff"></div>
<div class="a" style="left:296px;top:373px;width:410px;height:1px;background:#e0e0e0"></div>
<div class="a" style="left:296px;top:374px;width:410px;height:1.3px;background:#ffffff"></div>
<div class="a" style="left:296px;top:414px;width:410px;height:1px;background:#e0e0e0"></div>
<div class="a" style="left:296px;top:415px;width:410px;height:1.3px;background:#ffffff"></div>
<div class="a" style="left:296px;top:455px;width:410px;height:1px;background:#e0e0e0"></div>
<div class="a" style="left:296px;top:456px;width:410px;height:1.3px;background:#ffffff"></div>
<div class="a" style="left:296px;top:659px;width:410px;height:1px;background:#e0e0e0"></div>
<div class="a" style="left:296px;top:660px;width:410px;height:1.3px;background:#ffffff"></div>
<div class="t " style="left:337px;top:174.17px;;letter-spacing:0.036px">Отобрать...</div>
<div class="t " style="left:560px;top:172.97px;width:126px;text-align:right;">F6</div>
<div class="t " style="left:337px;top:214.17px;">Добавить...</div>
<div class="t " style="left:560px;top:212.97px;width:126px;text-align:right;">Ins</div>
<div class="t " style="left:337px;top:247.27px;">Размножить...</div>
<div class="t " style="left:560px;top:246.07px;width:126px;text-align:right;">Ctrl+F3</div>
<div class="t " style="left:337px;top:280.37px;font-weight:bold">Исправить...</div>
<div class="t " style="left:560px;top:279.17px;width:126px;text-align:right;font-weight:bold">F2</div>
<div class="t " style="left:337px;top:313.47px;">Переместить...</div>
<div class="t " style="left:337px;top:346.57px;">Удалить</div>
<div class="t " style="left:560px;top:345.37px;width:126px;text-align:right;">Del</div>
<div class="t " style="left:337px;top:386.67px;">Обновить</div>
<div class="t " style="left:560px;top:385.47px;width:126px;text-align:right;">F5</div>
<div class="t " style="left:337px;top:427.17px;">Формирование</div>
<div class="t " style="left:337px;top:467.37px;;letter-spacing:0.107px">Рассчитать факт...</div>
<div class="t " style="left:337px;top:500.17px;;letter-spacing:0.166px">Контроль производственной программы...</div>
<div class="t dis" style="left:337px;top:533.07px;;letter-spacing:0.095px">Пересчитать даты запуска...</div>
<div class="t dis" style="left:337px;top:565.77px;;letter-spacing:0.188px">Рассчитать приоритет выпуска изделий...</div>
<div class="t dis" style="left:337px;top:598.67px;;letter-spacing:0.173px">Рассчитать приоритет партий маршрутных листов...</div>
<div class="a" style="left:296px;top:624px;width:411px;height:31px;border:1px solid #a8c8ee;border-radius:3px;background:linear-gradient(to bottom,#e9f1fc,#cfe0f6)"></div>
<div class="t " style="left:337px;top:631.57px;;letter-spacing:0.017px">Перенести недодел...</div>
<svg class="a" style="left:301px;top:172px" width="19" height="20" viewBox="0 0 19 20"><path d="M0.8,1 H18.2 V4.5 L11.9,10.8 V17.4 L10.8,18.6 H7.4 V10.8 L0.8,4.5 Z" fill="url(#gfun)" stroke="#2d64a8" stroke-width="1.3" stroke-linejoin="round"/><path d="M1.5,3.2 H17.5" stroke="#5aaaf0" stroke-width="1"/><path d="M7,3.2 H12" stroke="#ffffff" stroke-width="1"/></svg>
<svg class="a" style="left:302px;top:211px" width="22" height="23" viewBox="0 0 22 23"><rect x="1" y="19.6" width="15" height="1.4" fill="#000" opacity="0.12"/><path d="M0.7,0.7 H11.2 L15.3,4.8 V19.8 H0.7 Z" fill="url(#gdoc)" stroke="#829494" stroke-width="1.3"/><path d="M11.2,0.7 V4.8 H15.3" fill="#e8f0f0" stroke="#829494" stroke-width="1.1"/></svg>
<svg class="a" style="left:302px;top:244px" width="22" height="23" viewBox="0 0 22 23"><rect x="1" y="19.6" width="15" height="1.4" fill="#000" opacity="0.12"/><path d="M0.7,0.7 H11.2 L15.3,4.8 V19.8 H0.7 Z" fill="url(#gdoc)" stroke="#829494" stroke-width="1.3"/><path d="M11.2,0.7 V4.8 H15.3" fill="#e8f0f0" stroke="#829494" stroke-width="1.1"/></svg>
<svg class="a" style="left:312px;top:255px" width="10" height="10" viewBox="0 0 10 10"><path d="M3.3,0.5 H6.7 V3.3 H9.5 V6.7 H6.7 V9.5 H3.3 V6.7 H0.5 V3.3 H3.3 Z" fill="#5ccc3c" stroke="#2e8a1e" stroke-width="1"/></svg>
<svg class="a" style="left:300px;top:277px" width="22" height="23" viewBox="0 0 22 23"><rect x="6" y="19.6" width="15" height="1.4" fill="#000" opacity="0.12"/><path d="M5.7,0.7 H15.5 L20.3,5.5 V19.8 H5.7 Z" fill="url(#gdoc)" stroke="#869898" stroke-width="1.3"/><path d="M15.5,0.7 V5.5 H20.3" fill="#e8f0f0" stroke="#869898" stroke-width="1.2"/><rect x="0.6" y="6.6" width="12.4" height="6.8" fill="#f4f4f4" stroke="#8a8a8a" stroke-width="1.2"/><rect x="2.2" y="8.8" width="6.8" height="2.8" fill="#3c64d8"/><path d="M10.5,4.3 V16.7 M8.5,4 H12.5 M8.5,17 H12.5" stroke="#555" stroke-width="1.2"/></svg>
<svg class="a" style="left:300px;top:310px" width="22" height="22" viewBox="0 0 22 22"><path d="M8.7,0.7 H16.8 L20.7,4.6 V15 H8.7 Z" fill="#f8f8f8" stroke="#a4a8ac" stroke-width="1.1"/><path d="M0.6,6.6 H8.4 V8.6 H18.8 V20.4 H0.6 Z" fill="url(#gfoldb)" stroke="#e0a548" stroke-width="1.2"/><path d="M1.6,7.8 H7.4 V9.8 H17.8 V19.4 H1.6 Z" fill="none" stroke="#fff6dc" stroke-width="0.9" opacity="0.9"/><path d="M2,12.4 H5.6 L6.6,11.2 H17.4 V19 H2 Z" fill="url(#gfold)"/><path d="M1.2,19.8 H18.2" stroke="#e08c28" stroke-width="1.1"/></svg>
<svg class="a" style="left:302px;top:343px" width="22" height="23" viewBox="0 0 22 23"><rect x="1" y="19.6" width="15" height="1.4" fill="#000" opacity="0.12"/><path d="M0.7,0.7 H11.2 L15.3,4.8 V19.8 H0.7 Z" fill="url(#gdoc)" stroke="#829494" stroke-width="1.3"/><path d="M11.2,0.7 V4.8 H15.3" fill="#e8f0f0" stroke="#829494" stroke-width="1.1"/></svg>
<svg class="a" style="left:312px;top:356px" width="10" height="5" viewBox="0 0 10 5"><rect x="0.6" y="0.6" width="8.8" height="3.8" rx="0.8" fill="#e0404a" stroke="#a81820" stroke-width="1"/></svg>
<svg class="a" style="left:300px;top:384px" width="21" height="19" viewBox="0 0 21 19"><path d="M17.2,8.1 A7.35,7.35 0 0 0 3.63,5.83" fill="none" stroke="url(#ggrn)" stroke-width="3.3"/><path d="M0,1.7 L0,10.9 L7,10.4 L8.8,8.9 Z" fill="url(#ggrn)"/><path d="M2.8,10.9 A7.35,7.35 0 0 0 16.37,13.17" fill="none" stroke="url(#ggrn2)" stroke-width="3.3"/><path d="M20,17.3 L20,8.1 L13,8.6 L11.2,10.1 Z" fill="url(#ggrn2)"/></svg>
<svg class="a" style="left:691px;top:427px" width="9" height="13" viewBox="0 0 9 13"><path d="M1,0.5 L8,6.5 L1,12.5 Z" fill="#4d86d0"/></svg>
</body></html>
